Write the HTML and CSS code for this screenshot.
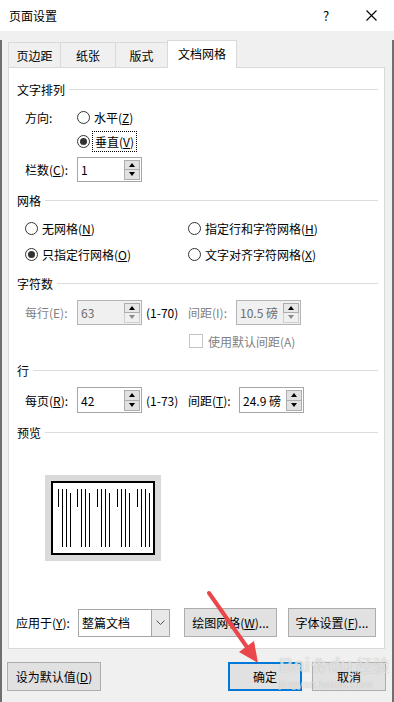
FILE: index.html
```html
<!DOCTYPE html>
<html lang="zh-CN">
<head>
    <meta charset="UTF-8">
    <meta name="viewport" content="width=device-width, initial-scale=1.0">
    <title>页面设置</title>
    <link rel="stylesheet" href="styles.css">
</head>
<body>
    <div class="dialog">
        <div class="titlebar">
            <span class="title">页面设置</span>
            <span class="tb-btn help">?</span>
            <span class="tb-btn">
                <svg width="11" height="11" viewBox="0 0 11 11"><path d="M0.5 0.5 L10.5 10.5 M10.5 0.5 L0.5 10.5" stroke="#000" stroke-width="1.1" fill="none"/></svg>
            </span>
        </div>

        <div class="main">
            <div class="tabs">
                <div class="tab t1">页边距</div>
                <div class="tab t2">纸张</div>
                <div class="tab t3">版式</div>
                <div class="tab active">文档网格</div>
            </div>

            <div class="panel">
                <div class="group-title">文字排列</div>
                <div class="row radio-row r-dir">
                    <span class="lbl">方向:</span>
                    <span class="radio"></span>
                    <span class="opt">水平(<u>Z</u>)</span>
                </div>
                <div class="row radio-row r-dir2">
                    <span class="radio on"></span>
                    <span class="opt focus">垂直(<u>V</u>)</span>
                </div>
                <div class="row spin-row r-cols">
                    <span class="lbl">栏数(<u>C</u>):</span>
                    <div class="spin">
                        <span class="val">1</span>
                        <span class="btns"><span class="up"></span><span class="dn"></span></span>
                    </div>
                </div>

                <div class="group-title g-grid">网格</div>
                <div class="row radio-row r-grid1">
                    <span class="col">
                        <span class="radio"></span>
                        <span class="opt-sm">无网格(<u>N</u>)</span>
                    </span>
                    <span class="col">
                        <span class="radio"></span>
                        <span class="opt-sm">指定行和字符网格(<u>H</u>)</span>
                    </span>
                </div>
                <div class="row radio-row r-grid2">
                    <span class="col">
                        <span class="radio on"></span>
                        <span class="opt-sm">只指定行网格(<u>O</u>)</span>
                    </span>
                    <span class="col">
                        <span class="radio"></span>
                        <span class="opt-sm">文字对齐字符网格(<u>X</u>)</span>
                    </span>
                </div>

                <div class="group-title g-chars">字符数</div>
                <div class="row spin-row r-chars">
                    <span class="lbl disabled">每行(E):</span>
                    <div class="spin off">
                        <span class="val">63</span>
                        <span class="btns"><span class="up"></span><span class="dn"></span></span>
                    </div>
                    <span class="range">(1-70)</span>
                    <span class="lbl2 disabled">间距(I):</span>
                    <div class="spin off">
                        <span class="val">10.5 磅</span>
                        <span class="btns"><span class="up"></span><span class="dn"></span></span>
                    </div>
                </div>
                <div class="row check-row">
                    <span class="check"></span>
                    <span class="disabled">使用默认间距(A)</span>
                </div>

                <div class="group-title g-lines">行</div>
                <div class="row spin-row r-lines">
                    <span class="lbl">每页(<u>R</u>):</span>
                    <div class="spin">
                        <span class="val">42</span>
                        <span class="btns"><span class="up"></span><span class="dn"></span></span>
                    </div>
                    <span class="range">(1-73)</span>
                    <span class="lbl2 wide">间距(<u>T</u>):</span>
                    <div class="spin">
                        <span class="val">24.9 磅</span>
                        <span class="btns"><span class="up"></span><span class="dn"></span></span>
                    </div>
                </div>

                <div class="group-title g-preview">预览</div>
                <div class="preview">
                    <svg width="116" height="86" viewBox="0 0 116 86">
                        <rect x="0" y="0" width="116" height="86" fill="#dadada"/>
                        <rect x="7" y="7" width="102" height="72" fill="#fff" stroke="#000" stroke-width="2"/>
                        <g stroke="#000" stroke-width="1">
                            <path d="M13.5 14 V32 M17.5 14 V72 M21.5 14 V72 M25.5 18 V72"/>
                            <path d="M32.5 14 V32 M36.5 14 V72 M40.5 14 V72 M44.5 18 V72"/>
                            <path d="M52.5 14 V32 M56.5 14 V72 M60.5 14 V72 M64.5 18 V72"/>
                            <path d="M72.5 14 V32 M76.5 14 V72 M80.5 14 V72 M84.5 18 V72"/>
                            <path d="M92.5 14 V32 M96.5 14 V72 M100.5 14 V72 M104.5 18 V72"/>
                        </g>
                    </svg>
                </div>

                <div class="row apply-row">
                    <span class="lbl-apply">应用于(<u>Y</u>):</span>
                    <div class="select">
                        <span class="val">整篇文档</span>
                        <span class="dd">
                            <svg width="9" height="6" viewBox="0 0 9 6"><path d="M0.5 0.5 L4.5 4.5 L8.5 0.5" stroke="#555" stroke-width="1" fill="none"/></svg>
                        </span>
                    </div>
                    <span class="btn btn-draw">绘图网格(<u>W</u>)...</span>
                    <span class="btn btn-font">字体设置(<u>F</u>)...</span>
                </div>
            </div>

            <div class="footer">
                <span class="btn btn-default">设为默认值(<u>D</u>)</span>
                <div class="footer-right">
                    <span class="btn btn-ok">确定</span>
                    <span class="btn btn-cancel">取消</span>
                </div>
            </div>
        </div>

        <div class="watermark">
            <span class="wm-big">Bai</span><span class="wm-paw">&#10047;</span><span class="wm-big">du</span><span class="wm-cn">经验</span>
            <div class="wm-url">jingyan.baidu.com</div>
        </div>

        <svg class="arrow" width="394" height="702" viewBox="0 0 394 702">
            <path d="M209 593 L249 650" stroke="#e8474b" stroke-width="4" stroke-linecap="round" fill="none"/>
            <polygon points="258,663 239,652 254,641" fill="#e8474b"/>
        </svg>
    </div>
</body>
</html>
```

FILE: styles.css
```css
body {
    margin: 0;
    font-family: "Noto Sans CJK SC", "Noto Sans", sans-serif;
    font-size: 12px;
    color: #000;
}

.dialog {
    width: 394px;
    height: 702px;
    position: relative;
    overflow: hidden;
    background-color: #f0f0f0;
}

/* title bar */
.titlebar {
    height: 31px;
    background-color: #fff;
    display: flex;
    align-items: center;
}

.title {
    flex: 1;
    padding-left: 9px;
}

.tb-btn {
    width: 46px;
    height: 31px;
    display: flex;
    align-items: center;
    justify-content: center;
}

.help {
    font-size: 13px;
    padding-left: 2px;
    box-sizing: border-box;
}

.main {
    height: 671px;
    box-sizing: border-box;
    border-left: 2px solid #6f6f6f;
    border-right: 2px solid #6f6f6f;
    border-bottom: 1px solid #6f6f6f;
}

/* tabs */
.tabs {
    display: flex;
    align-items: flex-end;
    height: 27px;
    margin-top: 9px;
    padding-left: 6px;
}

.tab {
    height: 25px;
    box-sizing: border-box;
    border: 1px solid #d9d9d9;
    border-bottom: none;
    display: flex;
    align-items: center;
    justify-content: center;
    margin-left: -1px;
}

.tab.t1 { width: 53px; margin-left: 0; }
.tab.t2 { width: 56px; }
.tab.t3 { width: 53px; }

.tab.active {
    width: 70px;
    height: 28px;
    margin-bottom: -1px;
    background-color: #fff;
    position: relative;
    z-index: 1;
    padding-bottom: 2px;
}

/* white panel */
.panel {
    margin-left: 6px;
    width: 377px;
    height: 582px;
    box-sizing: border-box;
    border: 1px solid #d9d9d9;
    background-color: #fff;
    padding: 12px 6px 0 8px;
}

.group-title {
    display: flex;
    align-items: center;
    height: 18px;
}

.group-title::after {
    content: "";
    flex: 1;
    height: 1px;
    background-color: #dcdcdc;
    margin-left: 4px;
}

.g-grid { margin-top: 9px; }
.g-chars { margin-top: 9px; }
.g-lines { margin-top: 10px; }
.g-preview { margin-top: 10px; }

.row {
    display: flex;
    align-items: center;
    margin-left: 8px;
}

.radio-row { height: 22px; }
.spin-row { height: 25px; }

.r-dir { margin-top: 8px; }
.r-dir2 { margin-top: 2px; padding-left: 52px; }
.r-cols { margin-top: 5px; }
.r-grid1 { margin-top: 8px; }
.r-grid2 { margin-top: 4px; }
.r-chars { margin-top: 8px; }
.r-lines { margin-top: 8px; height: 26px; }

.lbl {
    width: 52px;
    flex: none;
}

.lbl2 {
    width: 48px;
    flex: none;
}

.lbl2.wide { width: 51px; }

.range {
    width: 46px;
    padding-left: 4px;
    box-sizing: border-box;
    flex: none;
}

.disabled { color: #7f7f7f; }

/* radio buttons */
.radio {
    width: 13px;
    height: 13px;
    box-sizing: border-box;
    border: 1px solid #333;
    border-radius: 50%;
    background-color: #fff;
    display: flex;
    align-items: center;
    justify-content: center;
    flex: none;
}

.radio.on::after {
    content: "";
    width: 7px;
    height: 7px;
    border-radius: 50%;
    background-color: #333;
}

.opt { margin-left: 4px; }

.focus {
    margin-left: 2px;
    padding: 1px 2px;
    border: 1px dotted #000;
}

.col {
    width: 163px;
    display: flex;
    align-items: center;
    flex: none;
}

.opt-sm { margin-left: 4px; }

/* spin boxes */
.spin {
    width: 65px;
    height: 100%;
    box-sizing: border-box;
    border: 1px solid #a6a6a6;
    background-color: #fff;
    display: flex;
    align-items: center;
    padding-left: 3px;
    flex: none;
}

.spin .val { flex: 1; }

.spin .btns {
    width: 16px;
    height: calc(100% - 3px);
    margin-right: 1px;
    display: flex;
    flex-direction: column;
}

.spin .up,
.spin .dn {
    flex: 1;
    border: 1px solid #adadad;
    background-color: #e1e1e1;
    display: flex;
    align-items: center;
    justify-content: center;
}

.spin .dn { border-top: none; }

.spin .up::after {
    content: "";
    border-left: 3.5px solid transparent;
    border-right: 3.5px solid transparent;
    border-bottom: 4px solid #000;
}

.spin .dn::after {
    content: "";
    border-left: 3.5px solid transparent;
    border-right: 3.5px solid transparent;
    border-top: 4px solid #000;
}

.spin.off {
    background-color: #f0f0f0;
    border-color: #b4b4b4;
    color: #6d6d6d;
}

.spin.off .up { background-color: #e8e8e8; }

.spin.off .dn {
    background-color: #f0f0f0;
    border-color: #cfcfcf;
}

.spin.off .dn::after { border-top-color: #8a8a8a; }

/* checkbox */
.check-row {
    height: 20px;
    margin-top: 6px;
    padding-left: 164px;
}

.check {
    width: 12px;
    height: 12px;
    border: 1px solid #c4c4c4;
    margin-right: 5px;
    flex: none;
}

/* preview */
.preview {
    margin: 34px 0 0 28px;
    width: 116px;
    height: 86px;
}

.preview svg { display: block; }

/* apply row */
.apply-row {
    height: 29px;
    margin-top: 47px;
    margin-left: -1px;
}

.lbl-apply {
    width: 62px;
    flex: none;
}

.select {
    width: 92px;
    height: 28px;
    box-sizing: border-box;
    border: 1px solid #a6a6a6;
    display: flex;
    align-items: stretch;
    flex: none;
}

.select .val {
    flex: 1;
    padding-left: 3px;
    display: flex;
    align-items: center;
}

.select .dd {
    width: 17px;
    border-left: 1px solid #a6a6a6;
    background-color: #e8e8e8;
    display: flex;
    align-items: center;
    justify-content: center;
}

.btn {
    height: 29px;
    box-sizing: border-box;
    border: 1px solid #adadad;
    background-color: #e1e1e1;
    display: flex;
    align-items: center;
    justify-content: center;
    flex: none;
}

.btn-draw { width: 93px; margin-left: 14px; }
.btn-font { width: 88px; margin-left: 11px; }

/* footer */
.footer {
    display: flex;
    justify-content: space-between;
    margin: 13px 6px 0 5px;
}

.footer-right {
    display: flex;
    gap: 10px;
}

.btn-default { width: 94px; }
.btn-cancel { width: 74px; }

.btn-ok {
    width: 74px;
    border: 2px solid #0078d7;
}

/* overlays */
.watermark {
    position: absolute;
    left: 279px;
    top: 655px;
    color: rgba(255, 255, 255, 0.6);
    text-shadow: 0 0 1px rgba(140, 140, 140, 0.6);
    font-family: "Liberation Sans", sans-serif;
    line-height: 1;
}

.wm-big {
    font-size: 20px;
    font-weight: bold;
}

.wm-paw {
    font-size: 16px;
    padding: 0 1px;
}

.wm-cn {
    font-family: "Noto Sans CJK SC", sans-serif;
    font-size: 17px;
    margin-left: 3px;
}

.wm-url {
    font-size: 11px;
    margin-top: 4px;
    letter-spacing: 0.3px;
}

.arrow {
    position: absolute;
    left: 0;
    top: 0;
    pointer-events: none;
}
```
